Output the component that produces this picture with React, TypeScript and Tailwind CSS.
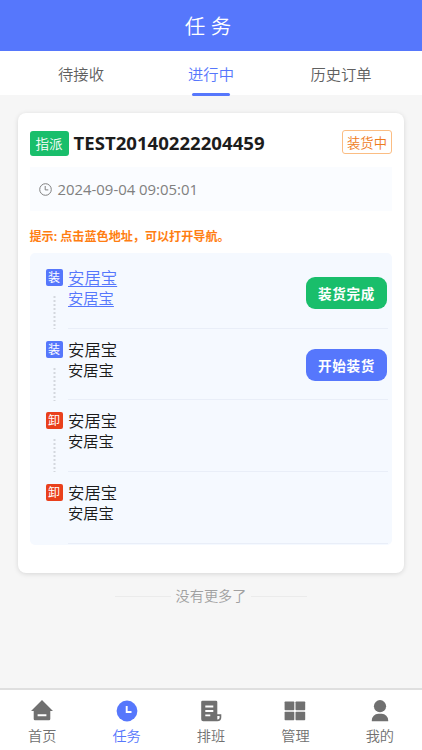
import React from "react";

type Stop = {
  kind: "装" | "卸";
  link?: boolean;
  action?: { label: string; tone: "green" | "blue" };
};

const stops: Stop[] = [
  { kind: "装", link: true, action: { label: "装货完成", tone: "green" } },
  { kind: "装", action: { label: "开始装货", tone: "blue" } },
  { kind: "卸" },
  { kind: "卸" },
];

function Header() {
  return (
    <header className="flex h-[51px] shrink-0 items-center justify-center bg-[#5677fc] pr-[6px] text-[20.5px] leading-[30px] text-white">
      <h1 className="font-[350] whitespace-pre">任 务</h1>
    </header>
  );
}

function Tabs() {
  const tabs = ["待接收", "进行中", "历史订单"];
  return (
    <nav className="flex h-11 shrink-0 bg-white px-4 text-[15.3px] text-[#606060]">
      {tabs.map((tab, i) => (
        <div key={tab} className={`flex flex-1 flex-col items-center ${i === 1 ? "text-[#5677fc]" : ""}`}>
          <span className="h-[42px] pt-px leading-[44px]">{tab}</span>
          {i === 1 && <span className="h-[3px] w-[38px] shrink-0 rounded-full bg-[#5677fc]" />}
        </div>
      ))}
    </nav>
  );
}

function StopRow({ stop, last }: { stop: Stop; last: boolean }) {
  const load = stop.kind === "装";
  const text = stop.link ? "text-[#5677fc] underline underline-offset-2 decoration-1" : "text-[#1a1a1a]";
  return (
    <li className="flex h-[71.7px]">
      <div className="flex w-[22.5px] shrink-0 flex-col items-start pt-3">
        <span
          className={`flex h-[17px] w-[17px] shrink-0 items-center justify-center rounded-[2px] text-[12px] leading-[17px] font-normal text-white ${load ? "bg-[#5677fc]" : "bg-[#e9401c]"}`}
        >
          {stop.kind}
        </span>
        {!last && (
          <svg width="17" height="34" viewBox="0 0 17 34" className="mt-[9px] shrink-0">
            <line x1="8.5" y1="1" x2="8.5" y2="34" stroke="#d3d7de" strokeWidth="2" strokeDasharray="2 2" />
          </svg>
        )}
      </div>
      <div className="flex flex-1 justify-between border-b border-[#e9eef8] pt-[10px]">
        <div className="flex flex-col items-start">
          <span className={`text-[16.4px] leading-[21px] ${text}`}>安居宝</span>
          <span className={`text-[15.3px] leading-[21px] ${text}`}>安居宝</span>
        </div>
        {stop.action && (
          <button
            className={`mt-[10px] mr-px h-8 w-[81px] rounded-[9px] pt-px text-[13.6px] leading-[31px] font-bold tracking-[0.6px] text-white ${stop.action.tone === "green" ? "bg-[#19be6b]" : "bg-[#5677fc]"}`}
          >
            {stop.action.label}
          </button>
        )}
      </div>
    </li>
  );
}

function TaskCard() {
  return (
    <section className="mr-[18px] ml-[17.5px] mt-[18px] h-[460px] shrink-0 rounded-[8px] bg-white px-3 pt-[17px] shadow-[0_1px_5px_rgba(0,0,0,0.13)]">
      <div className="flex h-[26px] items-center">
        <span className="h-[25px] w-[39px] rounded-[3px] bg-[#19be6b] text-center text-[13.5px] leading-[26px] text-white">
          指派
        </span>
        <h2 className="ml-[5px] flex-1 text-[18.6px] leading-[26px] font-bold text-[#1c1c1c]">TEST20140222204459</h2>
        <span className="-mt-[3px] h-6 w-[50px] rounded-[3px] border border-[#fbbd83] text-center text-[13.3px] leading-[24px] text-[#ee7b1c]">
          装货中
        </span>
      </div>
      <div className="mt-[11px] flex h-[44px] items-center bg-[#fafcff] pl-[9px] text-[#808080]">
        <svg width="13" height="13" viewBox="0 0 13 13" fill="none" stroke="currentColor" strokeWidth="1">
          <circle cx="6.5" cy="6.5" r="5.8" />
          <path d="M6.2 3v3.9h3.1" />
        </svg>
        <span className="ml-[6px] text-[14.9px] leading-5 font-normal">2024-09-04 09:05:01</span>
      </div>
      <p className="mt-4 text-[12.1px] leading-[20px] font-bold text-[#ff7e12]">提示: 点击蓝色地址，可以打开导航。</p>
      <ul className="mt-[6px] h-[292px] rounded-[5px] bg-[#f5f9ff] pt-1 pr-1 pl-4">
        {stops.map((stop, i) => (
          <StopRow key={i} stop={stop} last={i === stops.length - 1} />
        ))}
      </ul>
    </section>
  );
}

function HomeIcon() {
  return (
    <svg width="22" height="22" viewBox="0 0 22 22" fill="currentColor">
      <path fillRule="evenodd" d="M11 0 22 11H19.3V19a1.3 1.3 0 0 1-1.3 1.3H4A1.3 1.3 0 0 1 2.700 19v-8H0ZM6.600 14.200v2h8.800v-2Z" />
    </svg>
  );
}

function ClockIcon() {
  return (
    <svg width="22" height="22" viewBox="0 0 22 22" fill="none">
      <circle cx="11" cy="11" r="10.400" fill="currentColor" />
      <path d="M10.700 6v6h4.800" stroke="white" strokeWidth="1.900" />
    </svg>
  );
}

function ScheduleIcon() {
  return (
    <svg width="22" height="22" viewBox="0 0 22 22" fill="none">
      <path
        d="M2.500 .7h13.500a1.300 1.300 0 0 1 1.300 1.300V14.200h4V17.200a4 4 0 0 1-4 4H3.200a2 2 0 0 1-2-2V2A1.300 1.300 0 0 1 2.500 .7Z"
        fill="currentColor"
      />
      <path d="M5.300 6.500h8M5.300 11h8M5.300 15.400h5" stroke="white" strokeWidth="1.800" />
      <path d="M17.300 15.900h2.300v1.600a2.100 2.100 0 0 1-2.300 2Z" fill="white" />
    </svg>
  );
}

function GridIcon() {
  return (
    <svg width="22" height="22" viewBox="0 0 22 22" fill="currentColor">
      <rect x=".6" y="1.600" width="9.700" height="8.700" rx=".7" />
      <rect x="11.500" y="1.600" width="9.700" height="8.700" rx=".7" />
      <rect x=".6" y="11.800" width="9.700" height="8.500" rx=".7" />
      <rect x="11.500" y="11.800" width="9.700" height="8.500" rx=".7" />
    </svg>
  );
}

function UserIcon() {
  return (
    <svg width="22" height="22" viewBox="0 0 22 22" fill="currentColor">
      <circle cx="11" cy="6.200" r="6.100" />
      <path d="M2.800 21.300v-1a6.500 6.500 0 0 1 6.500-6.500h3.400a6.500 6.500 0 0 1 6.500 6.500v1Z" />
    </svg>
  );
}

function TabBar() {
  const items = [
    { label: "首页", icon: <HomeIcon /> },
    { label: "任务", icon: <ClockIcon />, active: true },
    { label: "排班", icon: <ScheduleIcon /> },
    { label: "管理", icon: <GridIcon /> },
    { label: "我的", icon: <UserIcon /> },
  ];
  return (
    <nav className="mt-auto flex h-[62px] shrink-0 border-t-2 border-[#dfdfdf] bg-white">
      {items.map((item) => (
        <div
          key={item.label}
          className={`flex flex-1 flex-col items-center pt-[10px] ${item.active ? "text-[#5677fc]" : "text-[#707070]"}`}
        >
          {item.icon}
          <span className="mt-1 text-[14.2px] leading-5">{item.label}</span>
        </div>
      ))}
    </nav>
  );
}

export default function App() {
  return (
    <div className="flex h-[750px] w-full flex-col overflow-hidden bg-[#f6f6f6] font-['Open_Sans','Noto_Sans_CJK_SC',sans-serif] font-[350] whitespace-nowrap">
      <Header />
      <Tabs />
      <TaskCard />
      <div className="mt-[13px] flex shrink-0 items-center justify-center gap-[5px] text-[14.2px] leading-5 text-[#a0a0a0]">
        <span className="h-px w-14 bg-[#ebebeb]" />
        <span>没有更多了</span>
        <span className="h-px w-14 bg-[#ebebeb]" />
      </div>
      <TabBar />
    </div>
  );
}
